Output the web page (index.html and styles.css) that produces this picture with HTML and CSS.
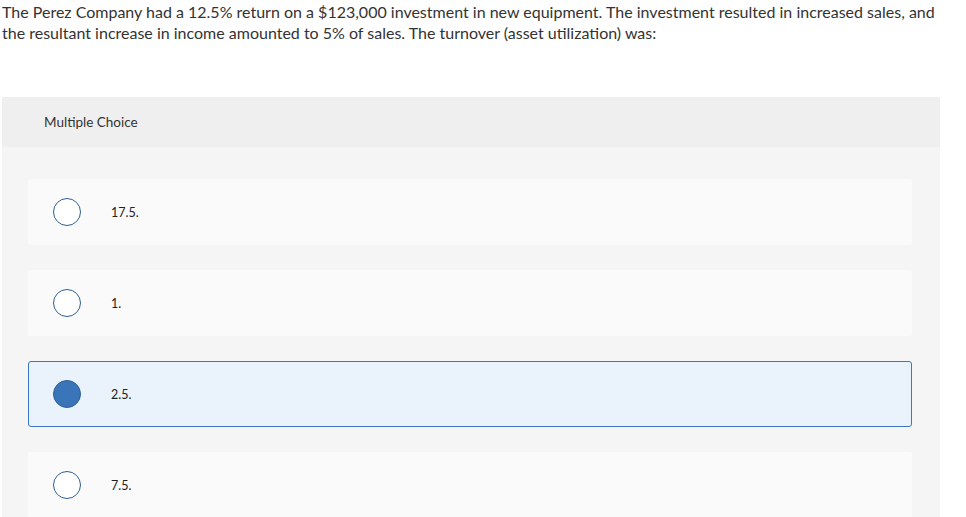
FILE: index.html
```html
<!DOCTYPE html>
<html>
<head>
<meta charset="utf-8">
<link rel="stylesheet" href="styles.css">
</head>
<body>
<div class="page">
  <p class="question">The Perez Company had a 12.5% return on a $123,000 investment in new equipment. The investment resulted in increased sales, and the resultant increase in income amounted to 5% of sales. The turnover (asset utilization) was:</p>
  <div class="panel">
    <div class="panel-head">Multiple Choice</div>
    <div class="panel-body">
      <div class="option"><span class="radio"></span><span class="label">17.5.</span></div>
      <div class="option"><span class="radio"></span><span class="label">1.</span></div>
      <div class="option selected"><span class="radio"></span><span class="label">2.5.</span></div>
      <div class="option"><span class="radio"></span><span class="label">7.5.</span></div>
    </div>
  </div>
</div>
</body>
</html>
```
FILE: styles.css
```css
html, body {
  margin: 0;
  padding: 0;
  background: #fff;
}
body {
  font-family: Lato, "Liberation Sans", sans-serif;
  color: #333;
}
.page {
  padding: 0 26px 0 2px;
}
.question {
  margin: 0;
  font-size: 16px;
  line-height: 21px;
  padding-top: 1px;
  height: 96px;
  width: 945px;
}
.panel {
  background: #f5f5f5;
}
.panel-head {
  background: #efefef;
  height: 50px;
  display: flex;
  align-items: center;
  padding-left: 42px;
  font-size: 13.5px;
  color: #333;
}
.panel-body {
  padding: 32px 28px 0 26px;
  display: flex;
  flex-direction: column;
  gap: 25px;
}
.option {
  height: 66px;
  background: #fafafa;
  border-radius: 3px;
  display: flex;
  align-items: center;
  padding-left: 25px;
  box-sizing: border-box;
}
.option.selected {
  background: #eaf2fc;
  border: 1px solid #3b78c3;
  padding-left: 24px;
}
.radio {
  width: 28px;
  height: 28px;
  box-sizing: border-box;
  border: 1.5px solid #2e5f93;
  border-radius: 50%;
  background: #fff;
  flex: none;
}
.selected .radio {
  background: #3a75b9;
  border-color: #2e5f93;
}
.label {
  margin-left: 30px;
  font-size: 12.5px;
  color: #222;
}
```
